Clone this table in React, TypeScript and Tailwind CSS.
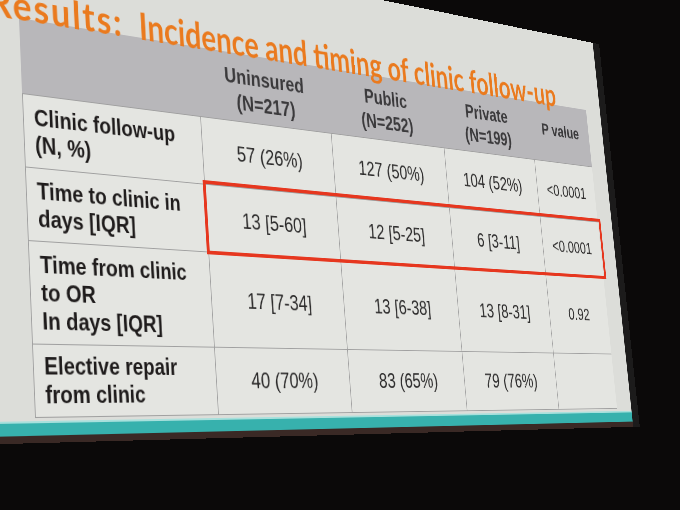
const header = [
  { top: "Uninsured", sub: "(N=217)" },
  { top: "Public", sub: "(N=252)" },
  { top: "Private", sub: "(N=199)" },
];

const rows = [
  { label: ["Clinic follow-up", "(N, %)"], cells: ["57 (26%)", "127 (50%)", "104 (52%)"], p: "<0.0001" },
  { label: ["Time to clinic in", "days [IQR]"], cells: ["13 [5-60]", "12 [5-25]", "6 [3-11]"], p: "<0.0001" },
  { label: ["Time from clinic", "to OR", "In days [IQR]"], cells: ["17 [7-34]", "13 [6-38]", "13 [8-31]"], p: "0.92" },
  { label: ["Elective repair", "from clinic"], cells: ["40 (70%)", "83 (65%)", "79 (76%)"], p: "" },
];

export default function App() {
  return (
    <div className="h-[510px] w-[680px] overflow-hidden bg-[#0b0909] font-['Liberation_Sans',Arial,sans-serif]">
      {/* slide, flat, then mapped onto the photo's perspective */}
      <div className="w-[984px] origin-top-left border-r-[14px] border-[#1c1b1b] bg-[#dcddd9] [transform:matrix3d(0.849822,0.143489,0,0.000375122,0.0361725,0.951875,0,-0.00010939,0,0,1,0,-18.5378,-81.0234,0,0.9957153)]">
        <div className="relative z-10 flex h-[98px] items-start whitespace-nowrap pl-[5px] pt-[63px] font-['Lato',sans-serif] text-[42px] font-bold leading-[42px] text-[#ea7a1e]">
          <span className="tracking-[2.5px]">Results:</span>
          <span className="ml-[20px] inline-block origin-left scale-x-[0.94]">
            Incidence and timing of clinic follow-up
          </span>
        </div>

        <div className="pl-[40px] pr-[30px]">
          <div className="relative grid w-[900px] grid-cols-[228px_194px_190px_170px_118px] grid-rows-[78px_75px_74px_102px_71px] border-b border-r border-[#a0a0a0]">
            {/* Header */}
            <div className="bg-[#b8b7ba]" />
            {header.map((h) => (
              <div
                key={h.top}
                className="flex flex-col items-center justify-center bg-[#b8b7ba] pt-[6px] text-[24px] font-bold leading-[30px] text-[#3b3a3c]"
              >
                <span>{h.top}</span>
                <span>{h.sub}</span>
              </div>
            ))}
            <div className="flex items-center justify-center bg-[#b8b7ba] pb-[8px] text-[22px] font-bold text-[#3b3a3c]">
              P value
            </div>

            {/* Body */}
            {rows.map((r) => (
              <>
                <div
                  key={r.label[0]}
                  className="flex flex-col justify-center border-l border-t border-[#a0a0a0] bg-[#e4e5e1] pl-[12px] text-[24px] font-bold leading-[28px] text-[#1f1c1c]"
                >
                  {r.label.map((l) => (
                    <span key={l}>{l}</span>
                  ))}
                </div>
                {r.cells.map((c) => (
                  <div
                    key={c}
                    className="flex items-center justify-center border-l border-t border-[#a0a0a0] bg-[#e4e5e1] text-[24px] text-[#2b2a2a]"
                  >
                    {c}
                  </div>
                ))}
                <div className="flex items-center justify-center border-l border-t border-[#a0a0a0] bg-[#e4e5e1] text-[22px] text-[#2b2a2a]">
                  {r.p}
                </div>
              </>
            ))}

            {/* highlight round the time-to-clinic row */}
            <div className="pointer-events-none absolute left-[226px] top-[149px] h-[81px] w-[680px] border-[4px] border-[#e6371f]" />
          </div>
        </div>

        <div className="mt-[3px] h-[2px] bg-[#a8e0dc]" />
        <div className="h-[12px] bg-[#37b1ad]" />
        <div className="h-[7px] bg-[#3a2925]" />
      </div>
    </div>
  );
}
